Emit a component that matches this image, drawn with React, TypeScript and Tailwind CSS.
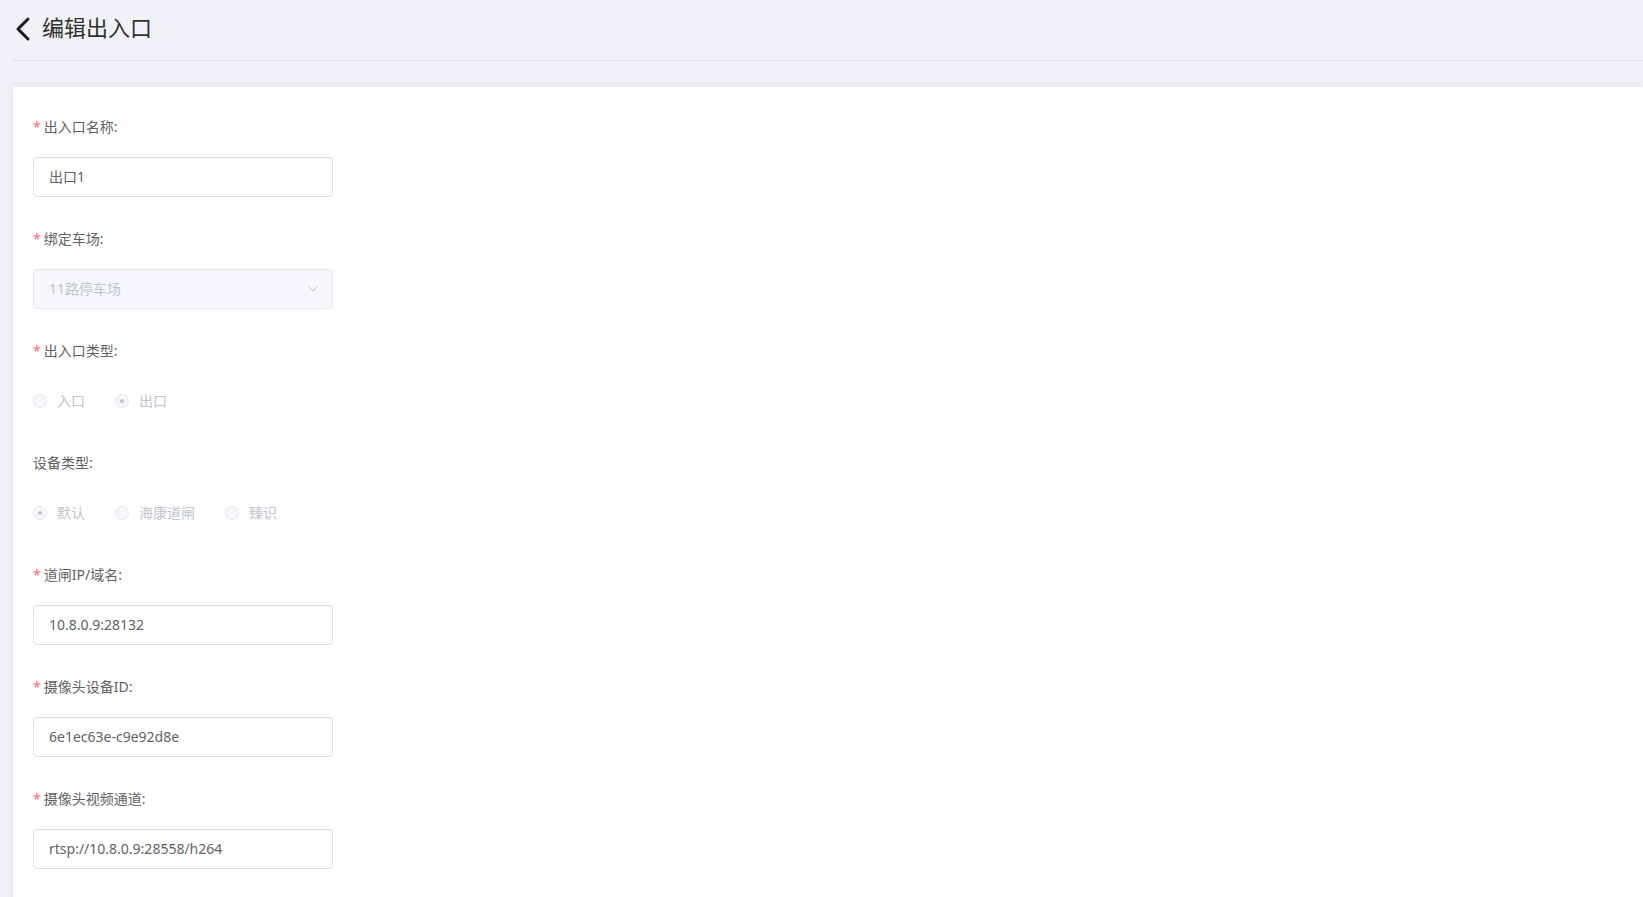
import { ChevronDown } from "lucide-react";

const FONT = {
  fontFamily: '"Noto Sans", "Noto Sans CJK SC", sans-serif',
};

function Label({ text, required = true }: { text: string; required?: boolean }) {
  return (
    <div className="h-5 leading-5 text-[14px] text-[#606266] mb-5">
      {required && <span className="text-[#f56c6c] mr-[3px]">*</span>}
      {text}:
    </div>
  );
}

function TextInput({ value }: { value: string }) {
  return (
    <div className="w-[300px] h-10 border border-[#dcdfe6] rounded bg-white px-[15px] pb-[2px] flex items-center text-[14px] text-[#606266]">
      {value}
    </div>
  );
}

function Radio({ label, checked }: { label: string; checked?: boolean }) {
  return (
    <div className="flex items-center mr-[30px]">
      <span className="w-[14px] h-[14px] rounded-full border border-[#e4e7ed] bg-[#f5f7fa] flex items-center justify-center">
        {checked && <span className="w-[4px] h-[4px] rounded-full bg-[#c0c4cc]" />}
      </span>
      <span className="ml-[10px] pb-[2px] text-[14px] text-[#c0c4cc]">{label}</span>
    </div>
  );
}

function Item({ children }: { children: React.ReactNode }) {
  return <div className="mb-8">{children}</div>;
}

export default function App() {
  return (
    <div className="min-h-[897px] bg-[#f0f2f5] pl-3" style={FONT}>
      <div className="h-[61px] border-b border-[#dcdfe6] flex items-center">
        <svg width="18" height="26" viewBox="0 0 18 26" className="ml-[2px] mt-[-3px]">
          <path d="M14 3 L4 13 L14 23" fill="none" stroke="#1a1a1a" strokeWidth="3" strokeLinecap="round" strokeLinejoin="round" />
        </svg>
        <span className="ml-[10px] mt-[-5px] text-[22px] text-[#303133]">编辑出入口</span>
      </div>

      <div className="mt-[26px] ml-px bg-white shadow-[0_-2px_12px_rgba(0,0,0,0.06)] pl-5 pt-[30px] pb-10 min-h-[810px]">
        <Item>
          <Label text="出入口名称" />
          <TextInput value="出口1" />
        </Item>
        <Item>
          <Label text="绑定车场" />
          <div className="w-[300px] h-10 border border-[#e4e7ed] rounded bg-[#f5f7fa] px-[15px] flex items-center justify-between text-[14px] text-[#c0c4cc]">
            <span className="pb-[2px]">11路停车场</span>
            <ChevronDown size={16} strokeWidth={1.5} className="text-[#b8bcc4] -mr-[4px]" />
          </div>
        </Item>
        <Item>
          <Label text="出入口类型" />
          <div className="h-10 flex items-center">
            <Radio label="入口" />
            <Radio label="出口" checked />
          </div>
        </Item>
        <Item>
          <Label text="设备类型" required={false} />
          <div className="h-10 flex items-center">
            <Radio label="默认" checked />
            <Radio label="海康道闸" />
            <Radio label="臻识" />
          </div>
        </Item>
        <Item>
          <Label text="道闸IP/域名" />
          <TextInput value="10.8.0.9:28132" />
        </Item>
        <Item>
          <Label text="摄像头设备ID" />
          <TextInput value="6e1ec63e-c9e92d8e" />
        </Item>
        <Item>
          <Label text="摄像头视频通道" />
          <TextInput value="rtsp://10.8.0.9:28558/h264" />
        </Item>
      </div>
    </div>
  );
}
